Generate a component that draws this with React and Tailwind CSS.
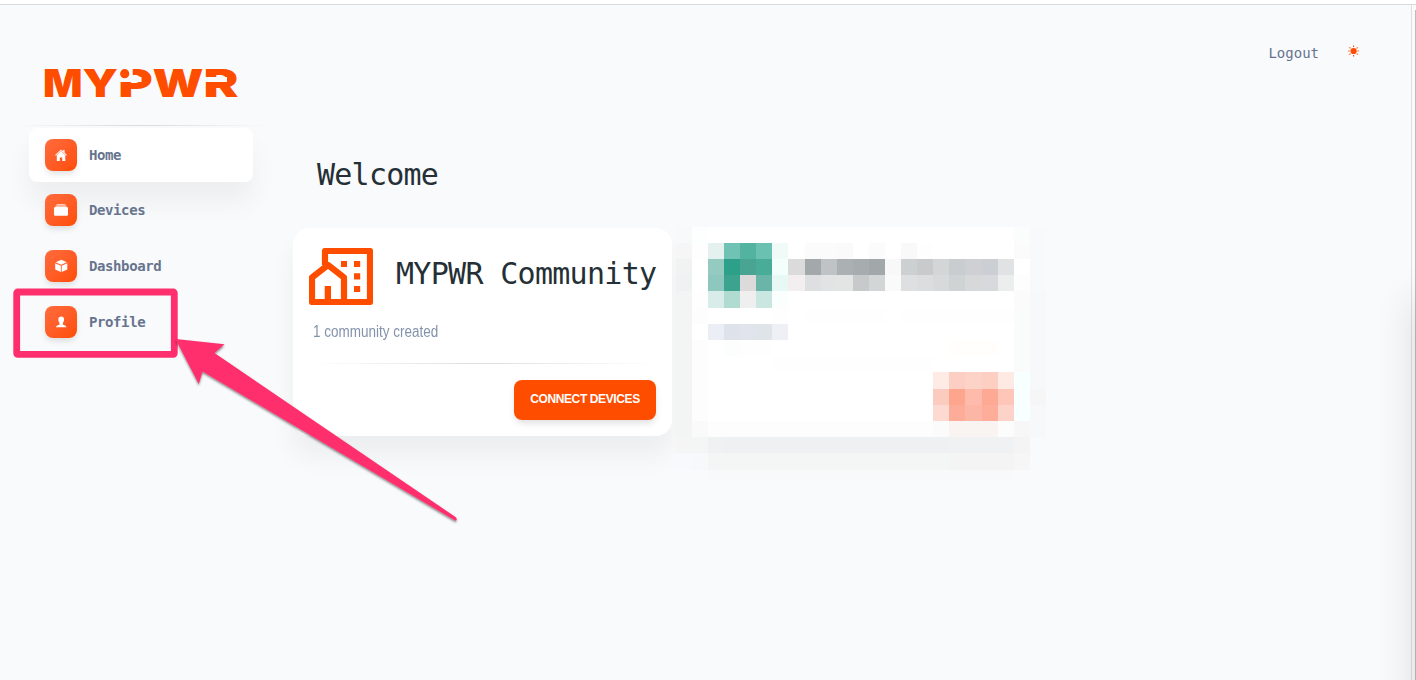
import React from "react";

const navItems = [
  { label: "Home", icon: "home", active: true },
  { label: "Devices", icon: "devices" },
  { label: "Dashboard", icon: "cube" },
  { label: "Profile", icon: "profile" },
];

function NavGlyph({ name }) {
  return (
    <svg className="h-[14px] w-[14px]" viewBox="0 0 14 14" fill="#fff">
      {name === "home" && (
        <>
          <path d="M1 7 7 1.4 8.9 3.1V2h1.8v2.8L13 7l-.9.8L7 3.2 1.9 7.8z" opacity=".85" />
          <path d="M2.8 7.2 7 3.6l4.3 3.6v5.9H8.3V9.5H5.8v3.6h-3z" />
        </>
      )}
      {name === "devices" && (
        <>
          <rect x="2.6" y="1" width="9" height="1.3" rx=".6" opacity=".65" />
          <rect x="1.4" y="2.5" width="11.2" height="1.3" rx=".6" opacity=".8" />
          <rect x="0" y="4" width="14" height="8.8" rx="1.2" />
        </>
      )}
      {name === "cube" && (
        <>
          <path d="M7.3 .7 12.800 3.200 7.300 5.800 1.700 3.200z" />
          <path d="M1.200 4.200 6.900 6.800v6.200L1.200 10.400z" />
          <path d="M13.300 4.200 7.700 6.800v6.200l5.600-2.600z" />
        </>
      )}
      {name === "profile" && (
        <path d="M7.2 1.4c1.9 0 2.9 1.2 2.9 3 0 1.5-.6 2.6-1.2 3.4v1.7c1 .8 3.200.7 3.500 2.700H2c.3-2 2.500-1.900 3.500-2.700V7.800C4.900 7 4.300 5.900 4.300 4.400c0-1.800 1-3 2.900-3z" />
      )}
    </svg>
  );
}

// Left edge and drawn width of every letter of the wordmark.
const wordmark = [
  { char: "M", x: -2, width: 39.5 },
  { char: "Y", x: 37.5, width: 35.5 },
  { char: "P", x: 73.3, width: 34.5 },
  { char: "W", x: 107.5, width: 51 },
  { char: "R", x: 158.5, width: 35 },
];

function Logo() {
  return (
    <svg className="h-[42px] w-[204px]" viewBox="-4 -6 204 42" role="img" aria-label="MYPWR">
      <text y="29.300" fill="#ff4d00" fontFamily="Inter, sans-serif" fontWeight="900" fontSize="38.500">
        {wordmark.map((l) => (
          <tspan key={l.char} x={l.x} textLength={l.width} lengthAdjust="spacingAndGlyphs">
            {l.char}
          </tspan>
        ))}
      </text>
      <g fill="#f9fafc">
        <rect x="74.500" y="0" width="13.200" height="14" />
        <rect x="74.500" y="9" width="22" height="5" />
        <rect x="159" y="9" width="23" height="5" />
      </g>
      <circle cx="79.700" cy="5.700" r="4.600" fill="#ff4d00" />
    </svg>
  );
}

function Sidebar() {
  return (
    <aside className="flex w-[293px] shrink-0 flex-col pt-[57px]">
      <div className="pl-[41px]">
        <Logo />
      </div>
      <div className="mt-[21px] ml-[13px] h-px w-[256px] shrink-0 bg-linear-to-r from-transparent via-[#d8dadc] to-transparent" />
      <nav className="mt-[2px] ml-[29px] flex w-[224px] flex-col">
        {navItems.map((item) => (
          <a
            key={item.label}
            className={
              item.active
                ? "mb-px flex h-[54px] items-center rounded-lg bg-white pl-4 shadow-[0_20px_27px_0_rgba(0,0,0,0.05)]"
                : "mb-[2px] flex h-[54px] items-center rounded-lg pl-4"
            }
          >
            <span className="flex h-8 w-8 items-center justify-center rounded-lg bg-linear-to-br from-[#ff6b3b] to-[#ff4d00] shadow-[0_4px_6px_-1px_rgba(0,0,0,0.12)]">
              <NavGlyph name={item.icon} />
            </span>
            <span className="ml-3 font-['DejaVu_Sans_Mono',monospace] text-[14px] leading-5 font-bold tracking-[-0.4px] text-[#67748e]">
              {item.label}
            </span>
          </a>
        ))}
      </nav>
    </aside>
  );
}

function CommunityCard() {
  return (
    <section className="flex h-[208px] w-[379px] flex-col rounded-2xl bg-white px-4 pt-5 shadow-[0_20px_27px_0_rgba(0,0,0,0.05)]">
      <div className="flex h-[57px]">
        <svg className="h-[57px] w-16 shrink-0" viewBox="0 0 64 57" fill="none">
          <path
            d="M16 17V3H61V54H3V29.500L19 17 35 29.500V54"
            stroke="#ff4d00"
            strokeWidth="6.200"
            strokeLinejoin="round"
          />
          <path
            d="M15.700 38H22V52H15.700zM32 13H38V19H32zM45 13H51.200V19H45zM45 25.200H51.200V31.400H45zM45 38H51.200V44H45z"
            fill="#ff4d00"
          />
        </svg>
        <h2 className="ml-[23px] pt-[6px] font-['DejaVu_Sans_Mono',monospace] text-[30px] leading-[40px] tracking-[-0.700px] whitespace-nowrap text-[#252f36]">
          MYPWR Community
        </h2>
      </div>
      <p className="mt-[15px] ml-1 w-fit origin-left scale-x-[0.843] font-['Liberation_Sans',Arial,sans-serif] text-[16px] leading-6 whitespace-nowrap text-[#8392ab]">
        1 community created
      </p>
      <div className="mt-[19px] h-px bg-linear-to-r from-transparent via-[#dedede] to-transparent" />
      <button className="mt-4 flex h-10 w-[142px] items-center justify-center self-end rounded-lg bg-[#ff4d00] pb-[3px] font-['Liberation_Sans',Arial,sans-serif] text-[12px] leading-4 font-bold tracking-[-0.380px] whitespace-nowrap text-white shadow-[0_4px_7px_-1px_rgba(0,0,0,0.13)]">
        CONNECT DEVICES
      </button>
    </section>
  );
}

const colEdges = [676, 692, 708, 724, 740, 756, 772, 788, 805, 821, 837, 853, 869, 885, 901, 917, 933, 949, 965, 982, 998, 1014, 1030, 1046];
const rowEdges = [227, 243, 259, 275, 291, 308, 324, 340, 356, 372, 389, 405, 421, 437, 453, 470, 480];
const gridStyle = {
  gridTemplateColumns: colEdges.slice(1).map((x, i) => `${x - colEdges[i]}px`).join(" "),
  gridTemplateRows: rowEdges.slice(1).map((y, i) => `${y - rowEdges[i]}px`).join(" "),
};

const W = "#ffffff";
const fill = (n, c) => Array(n).fill(c);
const mosaic = [
  ["#f8f9fa", "#fdfefe", ...fill(19, W), "#fbfcfc", "#f8f9fb"],
  ["#f6f6f6", "#fefefe", "#e4f1ef", "#6fc2b4", "#52b3a1", "#6bc1b1", "#f0faf8", W, "#fbfbfb", "#fbfbfb", "#fafafa", W, "#fbfbfb", W, "#f9f9f9", "#fdfefd", ...fill(5, W), "#fbfbfb", "#f8f9fb"],
  ["#f1f3f3", W, "#95cac1", "#2ca089", "#49a492", "#48ac98", "#f3fffc", "#dbdbdb", "#a3a8ab", "#bfc3c6", "#abb0b3", "#a7acaf", "#a2a7aa", "#f8f8f8", "#ccd0d0", "#c8cacc", "#d2d6d7", "#c9cdd0", "#cfd0d3", "#cbced2", "#e1e2e4", W, "#f8f9fb"],
  ["#eef2f3", W, "#8ec7be", "#3ba38e", "#dcdadb", "#6ab5a8", "#e8f8f4", "#f3eff0", "#dedfe1", "#e2e3e5", "#e3e5e4", "#c7cacb", "#d2d6d6", "#f9faf9", "#dedfe1", "#dcdddf", "#d7dadb", "#d0d3d4", "#d7d8da", "#d8d9dc", "#eceeee", "#fdfdfd", "#f7f9fb"],
  ["#f3f4f4", "#fefefe", "#d8ede9", "#b0dbd1", "#f0eff0", "#cae6e0", "#fafefc", ...fill(14, W), "#fafbfa", "#f7f8fa"],
  ["#f3f4f4", "#fdfdfd", ...fill(4, W), "#fefefe", W, ...fill(5, "#fefefe"), W, ...fill(7, "#fefefe"), "#fafcfb", "#f7f8fa"],
  ["#f3f4f4", W, "#ebeff5", "#dde2eb", "#e1e4ed", "#dfe4e8", "#eff0f5", ...fill(14, W), "#fafcfb", "#f7f8fa"],
  ["#f3f4f4", "#fdfdfd", W, "#fcfefd", "#fdfefd", "#fdfefd", ...fill(11, W), "#fffefd", "#fffefd", "#fffefd", W, "#fafcfb", "#f7f8fa"],
  ["#f3f5f4", "#fdfdfd", ...fill(4, W), ...fill(10, "#fefefe"), ...fill(5, W), "#fafcfb", "#f7f8fa"],
  ["#f3f4f4", "#fdfdfd", ...fill(14, W), "#feebe6", "#fdcfc4", "#fdd2c7", "#fdcec2", "#fee9e3", "#f8ffff", "#f7f8f9"],
  ["#f3f4f4", "#fdfdfd", ...fill(14, W), "#fccbbf", "#fda68d", "#febbab", "#fea994", "#fdc6b9", "#f8ffff", "#f6f6f7"],
  ["#f3f4f4", "#fdfdfd", ...fill(14, W), "#fcdad1", "#fdac99", "#fbb6a5", "#fdad9a", "#fdd2c8", "#f8ffff", "#f7f8f9"],
  ["#f3f4f4", "#fafafa", ...fill(14, "#fdfdfd"), "#fbfbfb", "#f9f3f2", "#f9f3f2", "#f9f3f2", "#fcfcfc", "#f7f7f7", "#f7f8f9"],
  ["#f5f5f5", "#f4f5f5", "#f0f1f3", ...fill(14, "#eff0f2"), ...fill(4, "#f0f1f3"), "#f4f4f4", "#f9fafc"],
  ["#f7f9fc", "#f7f8f9", ...fill(15, "#f4f5f5"), ...fill(4, "#f4f4f4"), "#f6f6f6", "#f9fafc"],
  ["#f9fafc", "#f9fafc", ...fill(19, "#f8f9fa"), "#f9fafc", "#f9fafc"],
];

function RedactedCard() {
  return (
    <div className="grid" style={gridStyle}>
      {mosaic.flatMap((row, r) =>
        row.map((color, c) => <span key={`${r}-${c}`} style={{ backgroundColor: color }} />)
      )}
    </div>
  );
}

function SunIcon() {
  return (
    <svg className="h-3 w-3" viewBox="0 0 12 12">
      <circle cx="5.600" cy="6" r="3.100" fill="#ff4d00" />
      <g stroke="#ff4d00" strokeWidth="1.100">
        <path d="M5.600 .500V2M5.600 10V11.500" />
        <path d="M0 6H2M9.200 6H11.200M1 2.400 2.800 3.200M10.200 2.400 8.400 3.200M1 9.600 2.800 8.800M10.200 9.600 8.400 8.800" opacity=".7" />
      </g>
    </svg>
  );
}

function Annotation() {
  return (
    <svg className="pointer-events-none absolute inset-0 h-[680px] w-[1416px]" viewBox="0 0 1416 680">
      <defs>
        <filter id="arrow-shadow" x="-10%" y="-10%" width="120%" height="125%">
          <feDropShadow dx="0" dy="1.500" stdDeviation="1" floodColor="#000" floodOpacity=".5" />
        </filter>
      </defs>
      <rect x="16.700" y="292" width="157.600" height="62.300" rx="1" fill="none" stroke="#ff2f6d" strokeWidth="6.800" strokeLinejoin="round" />
      <path
        d="M175.500 339 224.500 344.200 214.500 353 455.500 517Q458 519.500 455.500 520.800L202.500 371.500 198.800 384z"
        fill="#ff2f6d"
        filter="url(#arrow-shadow)"
      />
    </svg>
  );
}

export default function App() {
  return (
    <div className="relative flex h-[680px] w-[1416px] flex-col overflow-hidden bg-[#f9fafc]">
      <div className="h-[5px] shrink-0 border-b border-[#d9dadb] bg-white" />
      <div className="flex min-h-0 flex-1">
        <Sidebar />
        <main className="flex min-w-0 flex-1 flex-col">
          <header className="flex h-[96px] justify-end pr-[51px] pt-[38px]">
            <span className="font-['DejaVu_Sans_Mono',monospace] text-[14px] leading-5 text-[#67748e]">Logout</span>
            <span className="ml-[29px] pt-[2px]">
              <SunIcon />
            </span>
          </header>
          <h1 className="ml-6 pt-[54px] font-['DejaVu_Sans_Mono',monospace] text-[30px] leading-[40px] tracking-[-0.750px] text-[#252f36]">
            Welcome
          </h1>
          <div className="mt-8 flex items-start gap-1">
            <div className="pt-px">
              <CommunityCard />
            </div>
            <RedactedCard />
          </div>
        </main>
        <div className="flex w-[5px] shrink-0 border-l border-[#dddfe0]">
          <div className="mt-[5px] ml-[3px] w-px bg-[#bcbcbc]" />
        </div>
      </div>
      <div className="absolute top-[304px] left-[1420px] h-[460px] w-10 shadow-[0_0_40px_6px_rgba(0,0,0,0.12)]" />
      <Annotation />
    </div>
  );
}
